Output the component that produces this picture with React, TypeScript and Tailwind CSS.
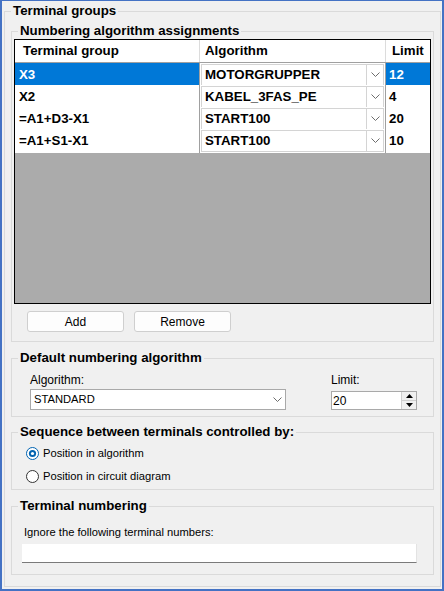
import React from 'react';

const rows = [
  { group: 'X3', algo: 'MOTORGRUPPER', limit: '12', selected: true },
  { group: 'X2', algo: 'KABEL_3FAS_PE', limit: '4' },
  { group: '=A1+D3-X1', algo: 'START100', limit: '20' },
  { group: '=A1+S1-X1', algo: 'START100', limit: '10' },
];

function Chevron() {
  return (
    <svg width="9" height="5" viewBox="0 0 9 5" className="block">
      <path d="M0.5 0.5 L4.5 4.5 L8.5 0.5" stroke="#6d6d6d" strokeWidth="1" fill="none" />
    </svg>
  );
}

function Radio({ checked }: { checked?: boolean }) {
  return (
    <svg width="13" height="13" viewBox="0 0 13 13" className="block">
      {checked ? (
        <>
          <circle cx="6.5" cy="6.5" r="6" fill="#fff" stroke="#0063b1" />
          <circle cx="6.5" cy="6.5" r="3.6" fill="#0063b1" />
          <circle cx="6.5" cy="6.5" r="1.6" fill="#fff" />
        </>
      ) : (
        <circle cx="6.5" cy="6.5" r="6" fill="#fff" stroke="#333" />
      )}
    </svg>
  );
}

export default function App() {
  return (
    <div className="w-[444px] h-[591px] bg-[#f0f0f0] border-x-2 border-b-2 border-t border-[#4472c4] font-['Liberation_Sans',Arial,sans-serif] text-black overflow-hidden">
      <fieldset className="mt-[2px] ml-[2px] w-[437px] h-[584px] border border-[#dadada] px-[6px]">
        <legend className="px-[2px] text-[13.3px] font-bold leading-[16px]">Terminal groups</legend>

        {/* Numbering algorithm assignments */}
        <fieldset className="mt-[4px] border border-[#dadada] px-[2px] pb-[9px]">
          <legend className="ml-[4px] px-[2px] text-[13.3px] font-bold leading-[16px]">
            Numbering algorithm assignments
          </legend>
          <div className="h-[265px] border border-black bg-[#ababab] flex flex-col">
            <div className="grid grid-cols-[185px_186px_44px] h-[23px] bg-white border-b border-[#a0a0a0] text-[13.3px] font-bold">
              <div className="pl-[8px] flex items-center border-r border-[#dcdcdc]">Terminal group</div>
              <div className="pl-[5px] flex items-center border-r border-[#dcdcdc]">Algorithm</div>
              <div className="pl-[6px] flex items-center">Limit</div>
            </div>
            {rows.map(r => (
              <div
                key={r.group}
                className="grid grid-cols-[185px_186px_44px] h-[22px] border-b border-[#a0a0a0] text-[13.3px] font-bold"
              >
                <div
                  className={
                    r.selected
                      ? 'pl-[4px] flex items-center border-r border-[#a0a0a0] bg-[#0078d7] text-white'
                      : 'pl-[4px] flex items-center border-r border-[#a0a0a0] bg-white'
                  }
                >
                  {r.group}
                </div>
                <div className="bg-white border-r border-[#a0a0a0] p-[1px]">
                  <div className="h-full flex border border-[#d4d4d4] bg-white">
                    <div className="flex-1 pl-[3px] flex items-center">{r.algo}</div>
                    <div className="w-[17px] border-l border-[#d4d4d4] flex items-center justify-center">
                      <Chevron />
                    </div>
                  </div>
                </div>
                <div
                  className={
                    r.selected
                      ? 'pl-[3px] flex items-center bg-[#0078d7] text-white'
                      : 'pl-[3px] flex items-center bg-white'
                  }
                >
                  {r.limit}
                </div>
              </div>
            ))}
          </div>
          <div className="mt-[7px] ml-[13px] flex gap-[10px]">
            <button className="w-[97px] h-[21px] rounded-[3px] border border-[#cfcfcf] bg-[#fdfdfd] text-[12px] leading-none">
              Add
            </button>
            <button className="w-[97px] h-[21px] rounded-[3px] border border-[#cfcfcf] bg-[#fdfdfd] text-[12px] leading-none">
              Remove
            </button>
          </div>
        </fieldset>

        {/* Default numbering algorithm */}
        <fieldset className="mt-[8px] border border-[#dadada] pb-[6px]">
          <legend className="ml-[6px] px-[2px] text-[13.3px] font-bold leading-[16px]">
            Default numbering algorithm
          </legend>
          <div className="flex mt-[7px]">
            <div className="ml-[18px] w-[256px]">
              <div className="text-[12px] leading-[14px]">Algorithm:</div>
              <div className="mt-[2px] h-[21px] flex items-center border border-[#a9a9a9] bg-white">
                <div className="flex-1 pl-[3px] text-[11.2px]">STANDARD</div>
                <div className="w-[16px] flex justify-center">
                  <Chevron />
                </div>
              </div>
            </div>
            <div className="ml-[45px] w-[86px]">
              <div className="text-[12px] leading-[14px]">Limit:</div>
              <div className="mt-[4px] h-[19px] flex border border-[#a9a9a9] bg-white">
                <div className="flex-1 pl-[1px] text-[12px] flex items-center">20</div>
                <div className="w-[15px] flex flex-col border-l border-[#cfcfcf]">
                  <div className="flex-1 bg-[#f0f0f0] border-b border-[#cfcfcf] flex items-center justify-center">
                    <svg width="7" height="4" viewBox="0 0 7 4"><path d="M0 4 L3.5 0 L7 4 Z" fill="#000" /></svg>
                  </div>
                  <div className="flex-1 bg-[#f0f0f0] flex items-center justify-center">
                    <svg width="7" height="4" viewBox="0 0 7 4"><path d="M0 0 L3.5 4 L7 0 Z" fill="#000" /></svg>
                  </div>
                </div>
              </div>
            </div>
          </div>
        </fieldset>

        {/* Sequence between terminals */}
        <fieldset className="mt-[7px] border border-[#dadada] pb-[1px]">
          <legend className="ml-[6px] px-[2px] text-[13.3px] font-bold leading-[16px]">
            Sequence between terminals controlled by:
          </legend>
          <div className="ml-[14px] mt-[2px] h-[23px] flex items-center gap-[4px] text-[11.2px]">
            <Radio checked />
            <span>Position in algorithm</span>
          </div>
          <div className="ml-[14px] h-[23px] flex items-center gap-[4px] text-[11.2px]">
            <Radio />
            <span>Position in circuit diagram</span>
          </div>
        </fieldset>

        {/* Terminal numbering */}
        <fieldset className="mt-[8px] border border-[#dadada] pb-[11px]">
          <legend className="ml-[6px] px-[2px] text-[13.3px] font-bold leading-[16px]">
            Terminal numbering
          </legend>
          <div className="ml-[12px] mt-[11px] text-[11.2px] leading-[14px]">
            Ignore the following terminal numbers:
          </div>
          <div className="ml-[10px] mt-[5px] w-[395px] h-[19px] bg-white border-b border-r border-b-[#7a7a7a] border-r-[#e3e3e3]" />
        </fieldset>
      </fieldset>
    </div>
  );
}
